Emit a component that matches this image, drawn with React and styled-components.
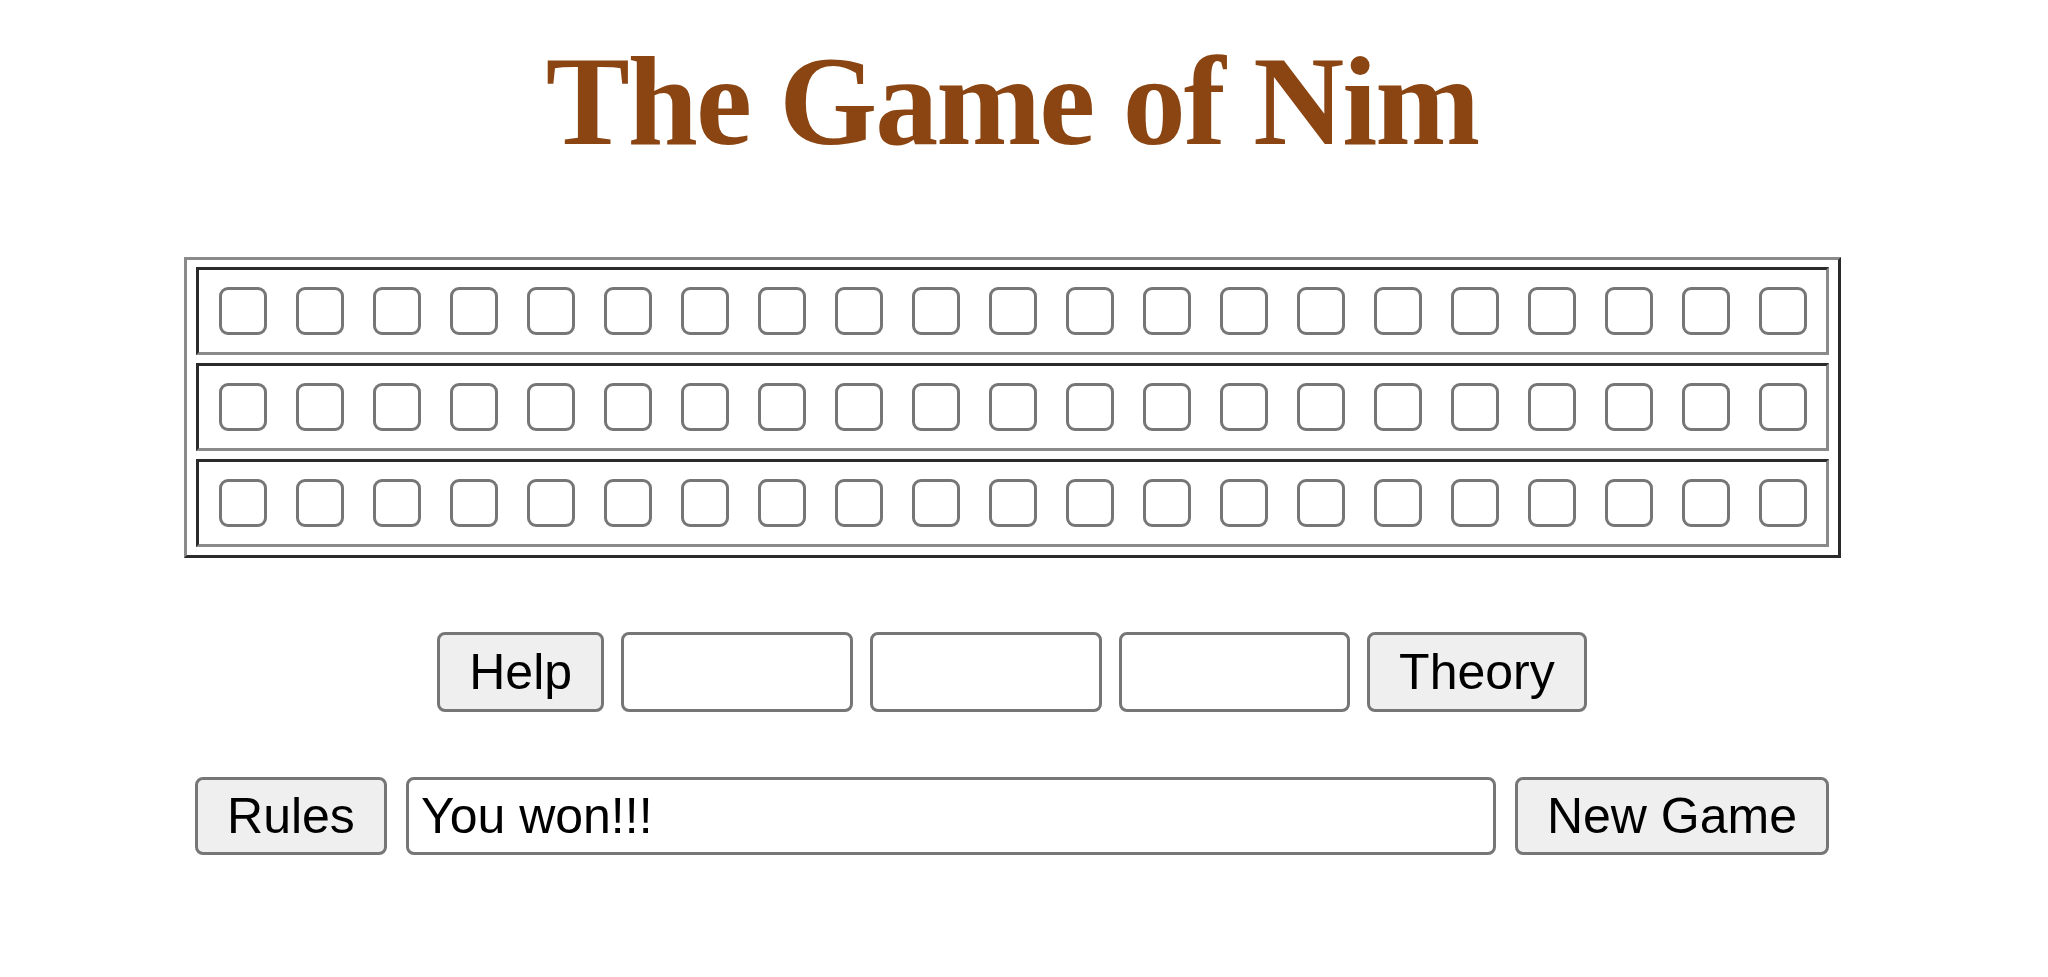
import React from "react";
import styled, { createGlobalStyle } from "styled-components";

const GlobalStyle = createGlobalStyle`
  body {
    margin: 0;
    background: #ffffff;
    font-family: "Liberation Sans", Arial, sans-serif;
  }
`;

const Page = styled.div`
  width: 2024px;
  display: flex;
  flex-direction: column;
  align-items: center;
`;

const Title = styled.h1`
  margin: 39px 0 0;
  font-family: "Liberation Serif", "Times New Roman", serif;
  font-size: 126px;
  line-height: 126px;
  letter-spacing: -2px;
  font-weight: bold;
  color: #8b4513;
`;

const Board = styled.div`
  margin-top: 92px;
  width: 1657px;
  box-sizing: border-box;
  padding: 7px 9px 8px;
  display: flex;
  flex-direction: column;
  gap: 8px;
  border: 3px solid;
  border-color: #8a8a8a #2a2a2a #2a2a2a #8a8a8a;
`;

const Heap = styled.div`
  height: 88px;
  box-sizing: border-box;
  padding: 0 18px 0 20px;
  display: flex;
  align-items: center;
  justify-content: space-between;
  border: 3px solid;
  border-color: #2a2a2a #8a8a8a #8a8a8a #2a2a2a;
`;

const Stick = styled.input`
  appearance: none;
  margin: 0;
  width: 48px;
  height: 48px;
  box-sizing: border-box;
  border: 3px solid #767676;
  border-radius: 9px;
  background: #ffffff;
`;

const Controls = styled.div`
  display: flex;
  gap: ${(p) => p.$gap}px;
  margin-top: ${(p) => p.$top}px;
`;

const Button = styled.button`
  height: ${(p) => p.$h}px;
  padding: 0 29px;
  box-sizing: border-box;
  border: 3px solid #767676;
  border-radius: 8px;
  background: #efefef;
  color: #000000;
  font-family: "Liberation Sans", Arial, sans-serif;
  font-size: 50px;
`;

const Field = styled.input`
  width: ${(p) => p.$w}px;
  height: ${(p) => p.$h}px;
  box-sizing: border-box;
  margin: 0;
  padding: 0 12px;
  border: 3px solid #767676;
  border-radius: 8px;
  background: #ffffff;
  color: #000000;
  font-family: "Liberation Sans", Arial, sans-serif;
  font-size: 50px;
`;

const heaps = [21, 21, 21];

const App = () => {
  return (
    <Page>
      <GlobalStyle />
      <Title>The Game of Nim</Title>

      <Board>
        {heaps.map((n, r) => (
          <Heap key={r}>
            {Array.from({ length: n }, (_, i) => (
              <Stick key={i} type="checkbox" />
            ))}
          </Heap>
        ))}
      </Board>

      <Controls $top={74} $gap={17}>
        <Button $h={80}>Help</Button>
        <Field $w={232} $h={80} readOnly />
        <Field $w={232} $h={80} readOnly />
        <Field $w={231} $h={80} readOnly />
        <Button $h={80}>Theory</Button>
      </Controls>

      <Controls $top={65} $gap={19}>
        <Button $h={78}>Rules</Button>
        <Field $w={1090} $h={78} defaultValue="You won!!!" readOnly />
        <Button $h={78}>New Game</Button>
      </Controls>
    </Page>
  );
};

export default App;
